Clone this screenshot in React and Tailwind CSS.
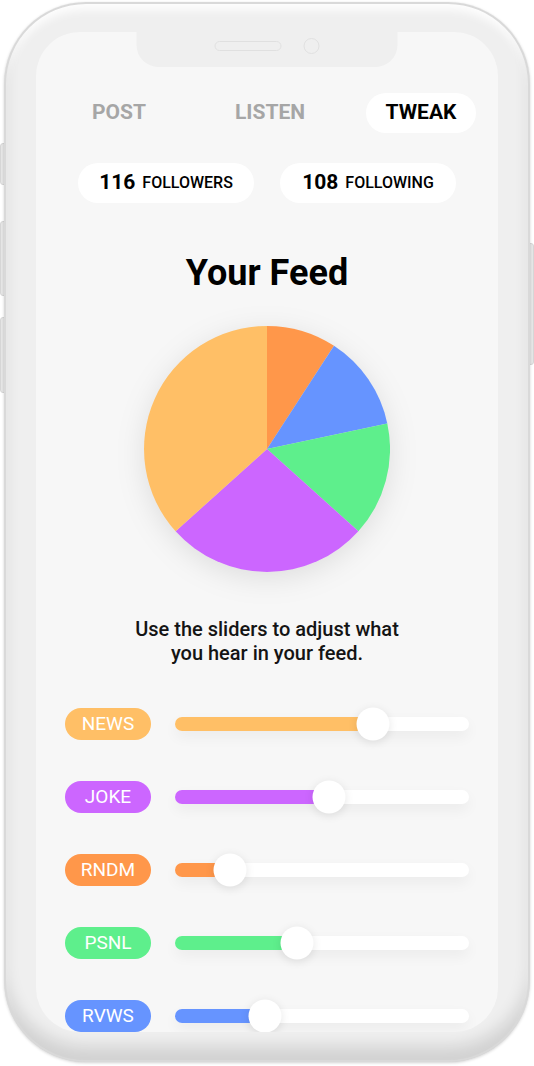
import React from 'react';

// Slider data: knob position in px along a 294px track
const sliders = [
  { label: 'NEWS', color: '#FFBF66', pos: 198 },
  { label: 'JOKE', color: '#CC66FF', pos: 154 },
  { label: 'RNDM', color: '#FF974A', pos: 55 },
  { label: 'PSNL', color: '#5EEF8C', pos: 122 },
  { label: 'RVWS', color: '#6694FF', pos: 90 },
];

function PieChart() {
  return (
    <svg width="246" height="246" viewBox="0 0 246 246" className="drop-shadow-[0_6px_14px_rgba(0,0,0,0.10)]">
      <path d="M123 123 L123 0 A123 123 0 0 1 190 19.8 Z" fill="#FF974A" />
      <path d="M123 123 L190 19.8 A123 123 0 0 1 243.3 97.4 Z" fill="#6694FF" />
      <path d="M123 123 L243.3 97.4 A123 123 0 0 1 214.4 205.3 Z" fill="#5EEF8C" />
      <path d="M123 123 L214.4 205.3 A123 123 0 0 1 31.6 205.3 Z" fill="#CC66FF" />
      <path d="M123 123 L31.6 205.3 A123 123 0 0 1 123 0 Z" fill="#FFBF66" />
    </svg>
  );
}

function SliderRow({ label, color, pos }) {
  return (
    <div className="flex items-center gap-[24px]">
      <div
        className="w-[86px] h-[32px] rounded-full flex items-center justify-center text-white text-[19px]"
        style={{ backgroundColor: color }}
      >
        {label}
      </div>
      <div className="relative flex-1 h-[14px] rounded-full bg-white shadow-[0_6px_14px_rgba(0,0,0,0.05)]">
        <div className="h-full rounded-full" style={{ width: pos, backgroundColor: color }} />
        <div
          className="absolute top-1/2 w-[33px] h-[33px] -translate-x-1/2 -translate-y-1/2 rounded-full bg-white shadow-[0_2px_10px_rgba(0,0,0,0.10)]"
          style={{ left: pos }}
        />
      </div>
    </div>
  );
}

export default function App() {
  return (
    <div className="relative w-[534px] h-[1066px] bg-white overflow-hidden" style={{ fontFamily: 'Roboto, "Liberation Sans", sans-serif' }}>
      {/* side buttons */}
      <div className="absolute left-0 top-[143px] w-[6px] h-[42px] rounded-l-[3px] bg-[#e6e6e6] border border-[#d6d6d6]" />
      <div className="absolute left-0 top-[221px] w-[6px] h-[75px] rounded-l-[3px] bg-[#e6e6e6] border border-[#d6d6d6]" />
      <div className="absolute left-0 top-[317px] w-[6px] h-[76px] rounded-l-[3px] bg-[#e6e6e6] border border-[#d6d6d6]" />
      <div className="absolute right-0 top-[243px] w-[6px] h-[122px] rounded-r-[3px] bg-[#e6e6e6] border border-[#d6d6d6]" />

      {/* phone body */}
      <div className="relative ml-[4px] mt-[2px] w-[526px] h-[1060px] rounded-[82px] bg-[#efefef] pt-[30px] pl-[32px] shadow-[inset_0_0_0_2px_#d9d9d9,inset_0_-16px_16px_rgba(0,0,0,0.12),inset_0_8px_10px_rgba(255,255,255,0.9),0_1px_3px_rgba(0,0,0,0.18)]">
        {/* screen */}
        <div className="relative w-[462px] h-[1000px] rounded-[44px] bg-[#f7f7f7] overflow-hidden">
          {/* notch */}
          <div className="absolute left-1/2 top-0 -translate-x-1/2 w-[261px] h-[35px] rounded-b-[22px] bg-[#efefef] flex items-center justify-center gap-[22px]">
            <div className="w-[67px] h-[10px] rounded-full border border-[#e0e0e0] -mt-[8px]" />
            <div className="w-[16px] h-[16px] rounded-full border border-[#e0e0e0] -mt-[8px]" />
          </div>

          {/* tabs */}
          <div className="flex justify-between pl-[28px] pr-[22px] pt-[61px]">
            <div className="w-[110px] h-[40px] flex items-center justify-center text-[21px] font-bold text-[#a6a6a6]">POST</div>
            <div className="w-[110px] h-[40px] flex items-center justify-center text-[21px] font-bold text-[#a6a6a6]">LISTEN</div>
            <div className="w-[110px] h-[40px] rounded-full bg-white flex items-center justify-center text-[21px] font-bold text-black">TWEAK</div>
          </div>

          {/* followers */}
          <div className="flex justify-center gap-[26px] mt-[30px]">
            <div className="w-[176px] h-[40px] rounded-full bg-white flex items-center justify-center gap-[7px] text-black">
              <span className="text-[21px] font-bold">116</span>
              <span className="text-[16px] font-medium">FOLLOWERS</span>
            </div>
            <div className="w-[176px] h-[40px] rounded-full bg-white flex items-center justify-center gap-[7px] text-black">
              <span className="text-[21px] font-bold">108</span>
              <span className="text-[16px] font-medium">FOLLOWING</span>
            </div>
          </div>

          {/* title */}
          <h1 className="mt-[50px] text-center text-[36px] leading-[40px] font-bold text-black">Your Feed</h1>

          {/* pie */}
          <div className="flex justify-center mt-[33px]">
            <PieChart />
          </div>

          {/* description */}
          <p className="mt-[45px] text-center text-[20px] leading-[24px] font-medium text-[#141414]">
            Use the sliders to adjust what
            <br />
            you hear in your feed.
          </p>

          {/* sliders */}
          <div className="flex flex-col gap-[41px] px-[29px] mt-[43px]">
            {sliders.map((s) => (
              <SliderRow key={s.label} {...s} />
            ))}
          </div>
        </div>
      </div>
    </div>
  );
}
